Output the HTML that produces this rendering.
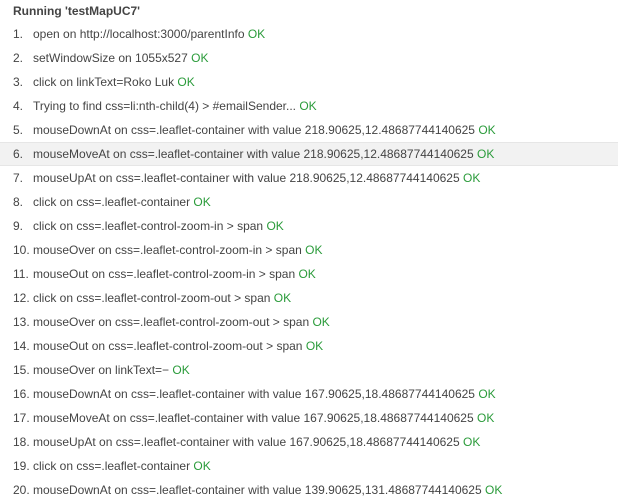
<!DOCTYPE html>
<html><head><style>
body{margin:0;width:618px;height:499px;overflow:hidden;background:#fff;font-family:"Liberation Sans",Arial,sans-serif;font-size:12px;color:#444;}
.t{position:absolute;left:13px;top:3px;font-weight:bold;line-height:16px;}
.r{position:absolute;left:0;width:618px;height:24px;line-height:24px;white-space:nowrap;}
.r.h{background:#f2f2f2;border-top:1px solid #e6e6e6;border-bottom:1px solid #e6e6e6;height:22px;line-height:22px;}
.n{position:absolute;left:13px;}
.x{position:absolute;left:33px;}
.ok{color:#2a9b3a;}
</style></head><body>
<div class="t">Running 'testMapUC7'</div>
<div class="r" style="top:22px"><span class="n">1.</span><span class="x">open on http://localhost:3000/parentInfo <span class="ok">OK</span></span></div>
<div class="r" style="top:46px"><span class="n">2.</span><span class="x">setWindowSize on 1055x527 <span class="ok">OK</span></span></div>
<div class="r" style="top:70px"><span class="n">3.</span><span class="x">click on linkText=Roko Luk <span class="ok">OK</span></span></div>
<div class="r" style="top:94px"><span class="n">4.</span><span class="x">Trying to find css=li:nth-child(4) &gt; #emailSender... <span class="ok">OK</span></span></div>
<div class="r" style="top:118px"><span class="n">5.</span><span class="x">mouseDownAt on css=.leaflet-container with value 218.90625,12.48687744140625 <span class="ok">OK</span></span></div>
<div class="r h" style="top:142px"><span class="n">6.</span><span class="x">mouseMoveAt on css=.leaflet-container with value 218.90625,12.48687744140625 <span class="ok">OK</span></span></div>
<div class="r" style="top:166px"><span class="n">7.</span><span class="x">mouseUpAt on css=.leaflet-container with value 218.90625,12.48687744140625 <span class="ok">OK</span></span></div>
<div class="r" style="top:190px"><span class="n">8.</span><span class="x">click on css=.leaflet-container <span class="ok">OK</span></span></div>
<div class="r" style="top:214px"><span class="n">9.</span><span class="x">click on css=.leaflet-control-zoom-in &gt; span <span class="ok">OK</span></span></div>
<div class="r" style="top:238px"><span class="n">10.</span><span class="x">mouseOver on css=.leaflet-control-zoom-in &gt; span <span class="ok">OK</span></span></div>
<div class="r" style="top:262px"><span class="n">11.</span><span class="x">mouseOut on css=.leaflet-control-zoom-in &gt; span <span class="ok">OK</span></span></div>
<div class="r" style="top:286px"><span class="n">12.</span><span class="x">click on css=.leaflet-control-zoom-out &gt; span <span class="ok">OK</span></span></div>
<div class="r" style="top:310px"><span class="n">13.</span><span class="x">mouseOver on css=.leaflet-control-zoom-out &gt; span <span class="ok">OK</span></span></div>
<div class="r" style="top:334px"><span class="n">14.</span><span class="x">mouseOut on css=.leaflet-control-zoom-out &gt; span <span class="ok">OK</span></span></div>
<div class="r" style="top:358px"><span class="n">15.</span><span class="x">mouseOver on linkText=− <span class="ok">OK</span></span></div>
<div class="r" style="top:382px"><span class="n">16.</span><span class="x">mouseDownAt on css=.leaflet-container with value 167.90625,18.48687744140625 <span class="ok">OK</span></span></div>
<div class="r" style="top:406px"><span class="n">17.</span><span class="x">mouseMoveAt on css=.leaflet-container with value 167.90625,18.48687744140625 <span class="ok">OK</span></span></div>
<div class="r" style="top:430px"><span class="n">18.</span><span class="x">mouseUpAt on css=.leaflet-container with value 167.90625,18.48687744140625 <span class="ok">OK</span></span></div>
<div class="r" style="top:454px"><span class="n">19.</span><span class="x">click on css=.leaflet-container <span class="ok">OK</span></span></div>
<div class="r" style="top:478px"><span class="n">20.</span><span class="x">mouseDownAt on css=.leaflet-container with value 139.90625,131.48687744140625 <span class="ok">OK</span></span></div>
</body></html>
